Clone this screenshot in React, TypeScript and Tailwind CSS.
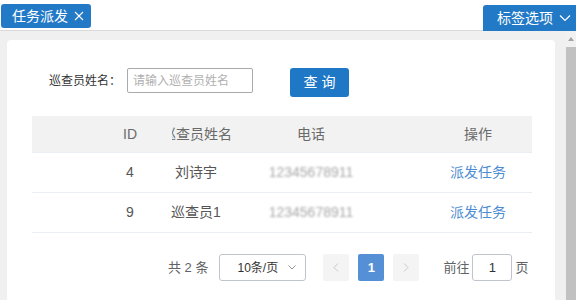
import React from "react";

const font = { fontFamily: '"Liberation Sans","Noto Sans CJK SC",sans-serif' };

function Row({ id, name }: { id: string; name: string }) {
  return (
    <div className="grid grid-cols-[68px_60px_72px_158px_34px_108px] h-[40px] items-center border-b border-[#ebeef5] text-[14px] text-[#555]">
      <div />
      <div className="text-center">{id}</div>
      <div className="text-center">{name}</div>
      <div className="text-center">
        <span className="text-[#a8a8a8] blur-[0.9px]">12345678911</span>
      </div>
      <div />
      <div className="text-center text-[#4f8dd3]">派发任务</div>
    </div>
  );
}

export default function App() {
  return (
    <div className="w-[576px] h-[300px] overflow-hidden bg-[#f0f0f0]" style={font}>
      {/* top bar */}
      <div className="h-[31px] bg-white border-b border-[#d9d9d9] flex justify-between items-start">
        <div className="mt-[4px] ml-[1px] h-[24px] w-[90px] bg-[#2279c6] rounded-[3px] flex items-center pl-[11px] text-white text-[14px]">
          <span>任务派发</span>
          <svg width="10" height="10" viewBox="0 0 10 10" className="ml-[6px]">
            <path d="M1 1L9 9M9 1L1 9" stroke="white" strokeWidth="1.1" />
          </svg>
        </div>
        <div className="mt-[5px] h-[26px] w-[93px] bg-[#2279c6] rounded-tl-[3px] flex items-center pl-[14px] text-white text-[14px]">
          <span>标签选项</span>
          <svg width="12" height="8" viewBox="0 0 12 8" className="ml-[6px]">
            <path d="M1 1.5L6 6.5L11 1.5" stroke="white" strokeWidth="1.2" fill="none" />
          </svg>
        </div>
      </div>
      {/* body */}
      <div className="flex h-[269px]">
        <div className="flex-1 pl-[7px] pt-[9px] pr-[11px]">
          <div className="bg-white rounded-[4px] h-[300px] pt-[28px]">
            {/* search */}
            <div className="flex items-start pl-[42px]">
              <div className="h-[25px] flex items-center text-[12px] text-[#333]">巡查员姓名：</div>
              <div className="ml-[6px] w-[126px] h-[25px] border border-[#aaa] rounded-[2px] flex items-center pl-[5px] text-[12px] text-[#b0b0b0]">
                请输入巡查员姓名
              </div>
              <div className="ml-[37px] w-[59px] h-[29px] bg-[#1f78c6] rounded-[3px] flex items-center justify-center text-white text-[14px]">
                查 询
              </div>
            </div>
            {/* table */}
            <div className="ml-[25px] w-[500px] mt-[19px]">
              <div className="grid grid-cols-[68px_60px_72px_158px_34px_108px] h-[37px] items-center bg-[#f2f2f2] border-b border-[#ebeef5] text-[14px] text-[#6a6a6a]">
                <div />
                <div className="text-center">ID</div>
                <div className="flex justify-end">
                  <div className="w-[60px] overflow-hidden flex justify-end whitespace-nowrap">巡查员姓名</div>
                </div>
                <div className="text-center">电话</div>
                <div />
                <div className="text-center">操作</div>
              </div>
              <Row id="4" name="刘诗宇" />
              <Row id="9" name="巡查员1" />
            </div>
            {/* pagination */}
            <div className="flex items-center pl-[161px] mt-[21px] h-[27px] text-[13px] text-[#606266]">
              <span>共 2 条</span>
              <div className="ml-[11px] w-[87px] h-[27px] border border-[#c0c4cc] rounded-[3px] flex items-center pl-[17px] pr-[9px] text-[12px] text-[#333]">
                <span className="flex-1">10条/页</span>
                <svg width="8" height="5" viewBox="0 0 8 5">
                  <path d="M0.5 0.5L4 4L7.5 0.5" stroke="#999" strokeWidth="1" fill="none" />
                </svg>
              </div>
              <div className="ml-[17px] w-[26px] h-[27px] bg-[#f4f4f5] rounded-[2px] flex items-center justify-center">
                <svg width="6" height="9" viewBox="0 0 6 9">
                  <path d="M5 0.5L1 4.5L5 8.5" stroke="#c8c9cc" strokeWidth="1" fill="none" />
                </svg>
              </div>
              <div className="ml-[9px] w-[26px] h-[27px] bg-[#5590d6] rounded-[2px] flex items-center justify-center text-white font-bold text-[13px]">
                1
              </div>
              <div className="ml-[9px] w-[26px] h-[27px] bg-[#f4f4f5] rounded-[2px] flex items-center justify-center">
                <svg width="6" height="9" viewBox="0 0 6 9">
                  <path d="M1 0.5L5 4.5L1 8.5" stroke="#c8c9cc" strokeWidth="1" fill="none" />
                </svg>
              </div>
              <span className="ml-[24px]">前往</span>
              <div className="ml-[3px] w-[40px] h-[27px] border border-[#c0c4cc] rounded-[3px] flex items-center justify-center text-[#333]">
                1
              </div>
              <span className="ml-[3px]">页</span>
            </div>
          </div>
        </div>
        {/* scrollbar */}
        <div className="w-[10px] bg-[#f1f1f1] flex flex-col">
          <div className="h-[16px] flex items-center justify-center">
            <svg width="6" height="4" viewBox="0 0 6 4">
              <path d="M0 4L3 0L6 4Z" fill="#a3a3a3" />
            </svg>
          </div>
          <div className="flex-1 bg-[#c1c1c1]" />
        </div>
      </div>
    </div>
  );
}
